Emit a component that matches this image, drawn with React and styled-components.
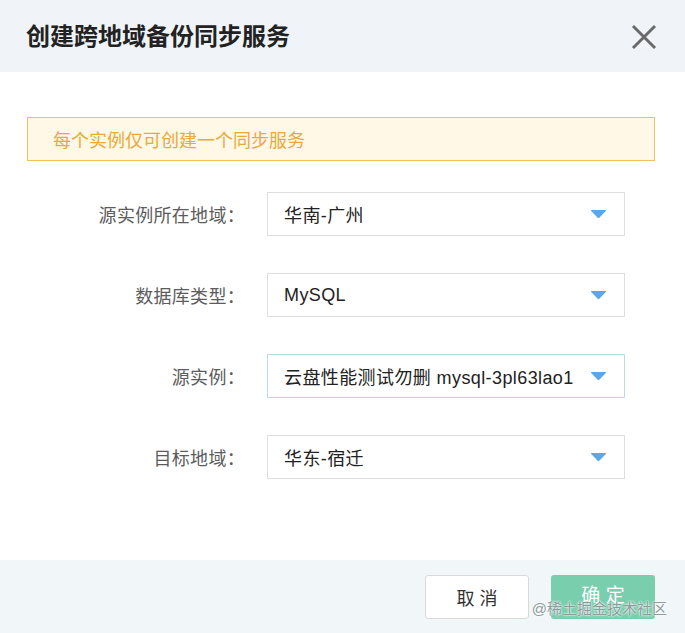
import styled, { createGlobalStyle } from "styled-components";

const GlobalStyle = createGlobalStyle`
  html, body {
    margin: 0;
    padding: 0;
    background: #ffffff;
  }
  body {
    font-family: "Liberation Sans", "Noto Sans CJK SC", sans-serif;
    color: #333;
  }
`;

const rows = [
  { label: "源实例所在地域：", value: "华南-广州" },
  { label: "数据库类型：", value: "MySQL" },
  { label: "源实例：", value: "云盘性能测试勿删 mysql-3pl63lao1", active: true },
  { label: "目标地域：", value: "华东-宿迁" },
];

function CloseIcon() {
  return (
    <svg width="26" height="26" viewBox="0 0 26 26">
      <path
        d="M2 2 L24 24 M24 2 L2 24"
        stroke="#6a6a6a"
        strokeWidth="3"
        fill="none"
      />
    </svg>
  );
}

function Caret() {
  return (
    <svg width="17" height="10" viewBox="0 0 17 10">
      <path
        d="M1.5 1 L15.5 1 Q16.5 1 15.8 1.9 L9.3 8.8 Q8.5 9.6 7.7 8.8 L1.2 1.9 Q0.5 1 1.5 1 Z"
        fill="#5ba7ea"
      />
    </svg>
  );
}

function App() {
  return (
    <>
      <GlobalStyle />
      <Dialog>
        <Header>
          <Title>创建跨地域备份同步服务</Title>
          <CloseBtn>
            <CloseIcon />
          </CloseBtn>
        </Header>
        <Body>
          <Alert>每个实例仅可创建一个同步服务</Alert>
          <Form>
            {rows.map((r) => (
              <Row key={r.label}>
                <Label>{r.label}</Label>
                <Select $active={r.active}>
                  <SelectText>{r.value}</SelectText>
                  <Caret />
                </Select>
              </Row>
            ))}
          </Form>
        </Body>
        <Footer>
          <CancelBtn>取 消</CancelBtn>
          <OkBtn>确 定</OkBtn>
          <Watermark>@稀土掘金技术社区</Watermark>
        </Footer>
      </Dialog>
    </>
  );
}

export default App;

const Dialog = styled.div`
  width: 685px;
  height: 633px;
  display: flex;
  flex-direction: column;
  overflow: hidden;
  background: #fff;
`;

const Header = styled.div`
  height: 72px;
  flex-shrink: 0;
  display: flex;
  align-items: center;
  justify-content: space-between;
  padding: 0 28px 0 26px;
  background: #f0f4f9;
`;

const Title = styled.div`
  font-size: 24px;
  font-weight: bold;
  color: #222;
  margin-top: -3px;
`;

const CloseBtn = styled.div`
  display: flex;
  width: 26px;
  height: 26px;
  margin-top: 2px;
`;

const Body = styled.div`
  flex: 1;
  padding: 45px 30px 0 27px;
`;

const Alert = styled.div`
  height: 44px;
  box-sizing: border-box;
  border: 1.5px solid #efc25a;
  background: #fff8e6;
  color: #eba83a;
  font-size: 18px;
  display: flex;
  align-items: center;
  padding-left: 25px;
`;

const Form = styled.div`
  display: flex;
  flex-direction: column;
  gap: 37px;
  margin-top: 31px;
`;

const Row = styled.div`
  display: flex;
  align-items: center;
  gap: 22px;
`;

const Label = styled.div`
  width: 218px;
  text-align: right;
  font-size: 18px;
  letter-spacing: 0.3px;
  color: #5c5c5c;
`;

const Select = styled.div`
  width: 358px;
  height: 44px;
  box-sizing: border-box;
  border: 1px solid ${(p) => (p.$active ? "#bcdbe8" : "#dedede")};
  background: #fff;
  display: flex;
  align-items: center;
  justify-content: space-between;
  padding: 0 17px 0 16px;
`;

const SelectText = styled.span`
  font-size: 18px;
  letter-spacing: 0.4px;
  color: #222;
  white-space: nowrap;
  overflow: hidden;
  max-width: 290px;
`;

const Footer = styled.div`
  position: relative;
  height: 73px;
  flex-shrink: 0;
  background: #f1f6f8;
  display: flex;
  justify-content: flex-end;
  align-items: flex-start;
  gap: 22px;
  padding: 15px 30px 0 0;
  box-sizing: border-box;
`;

const Button = styled.div`
  width: 104px;
  height: 44px;
  box-sizing: border-box;
  border-radius: 3px;
  display: flex;
  align-items: center;
  justify-content: center;
  font-size: 18px;
`;

const CancelBtn = styled(Button)`
  background: #fff;
  border: 1px solid #d9d9d9;
  color: #333;
`;

const OkBtn = styled(Button)`
  background: #79cfad;
  color: #fff;
  font-size: 19px;
  padding-bottom: 8px;
`;

const Watermark = styled.div`
  position: absolute;
  right: 18px;
  top: 37px;
  font-size: 15px;
  color: #8f9a9c;
  text-shadow: 0 0 2px #fff, 0 0 2px #fff;
`;
